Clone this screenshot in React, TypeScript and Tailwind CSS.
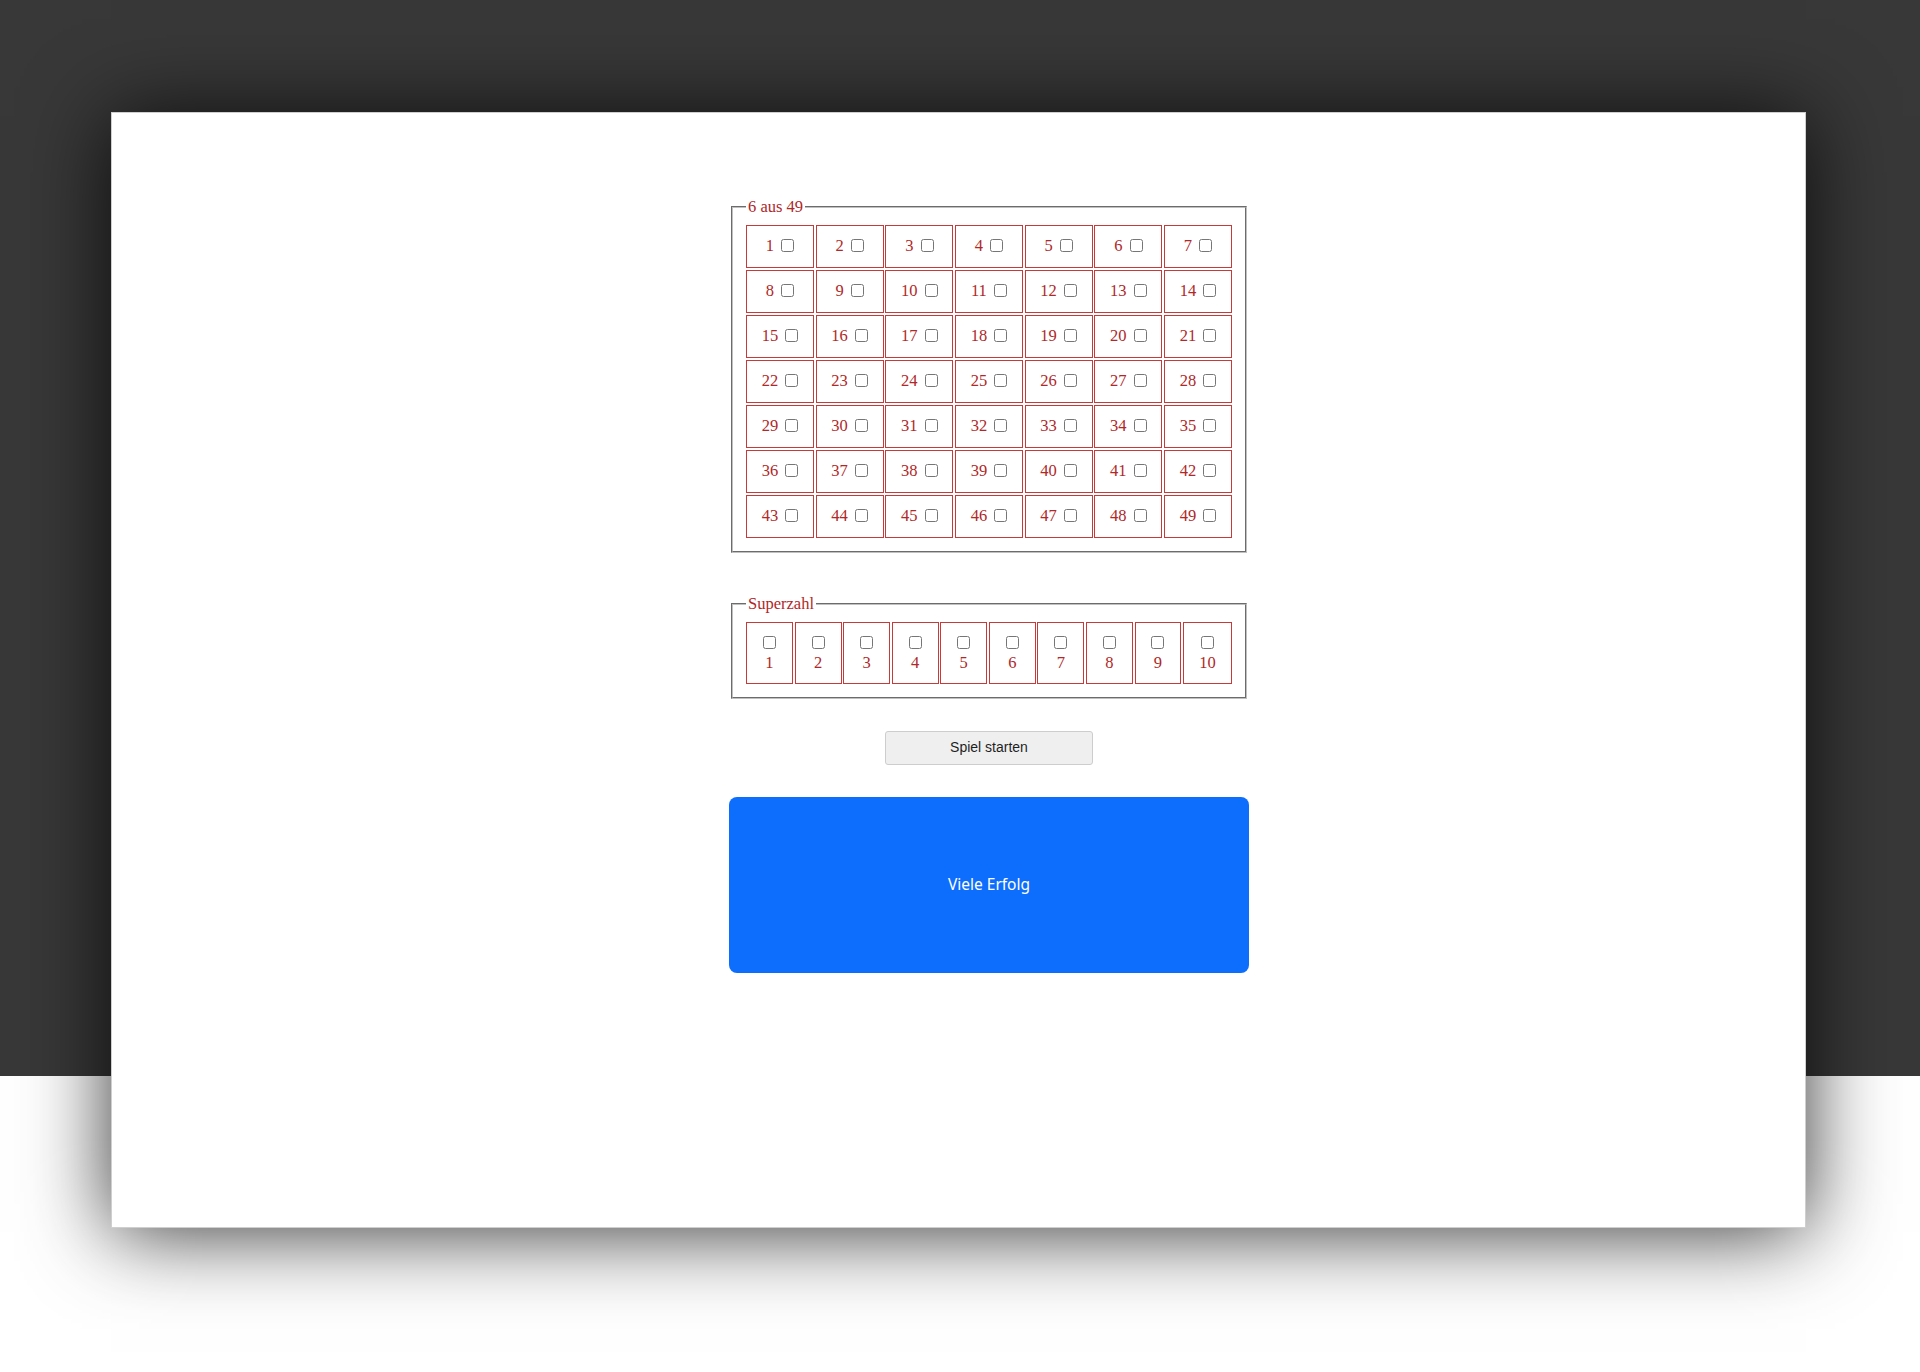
import React from "react";

const serif = "font-['Liberation_Serif','Times_New_Roman',serif]";

function NumCell({ n }: { n: number }) {
  return (
    <div className="h-[43px] border border-[#c83a3a] flex items-center justify-center">
      <span className={`${serif} text-[16.5px] leading-normal text-[#b02828] pt-[1px]`}>
        {n}{" "}
        <input type="checkbox" className="ml-[3px] align-[-1px]" />
      </span>
    </div>
  );
}

function SuperCell({ n, last }: { n: number; last?: boolean }) {
  return (
    <div
      className={`${last ? "w-[49px]" : "flex-1"} h-[62px] border border-[#c83a3a] flex flex-col items-center justify-center pt-[2px]`}
    >
      <input type="checkbox" className="m-0 w-[13px] h-[13px]" />
      <span className={`${serif} text-[16.5px] leading-[18px] mt-[5px] text-[#b02828]`}>{n}</span>
    </div>
  );
}

export default function App() {
  const nums = Array.from({ length: 49 }, (_, i) => i + 1);
  const supers = Array.from({ length: 10 }, (_, i) => i + 1);
  return (
    <div className="w-[1920px] h-[1372px] overflow-hidden bg-[linear-gradient(to_bottom,#383838_0px,#383838_1076px,#ffffff_1076px,#ffffff_100%)] pt-[112px] pl-[111px]">
      <div className="w-[1695px] h-[1116px] bg-white border border-[#cfcfcf] shadow-[0_4px_80px_rgba(0,0,0,0.8)]">
        <div className="ml-[617px] w-[520px] pt-[82px] flex flex-col items-center">
          <fieldset className="w-[516px] border-2 [border-style:groove] border-[#c0c0c0] pl-[13px] pr-[13px] pt-[5px] pb-[13px]">
            <legend className={`${serif} text-[16.5px] leading-normal text-[#b02828] px-[2px]`}>6 aus 49</legend>
            <div className="grid grid-cols-7 gap-x-[1.67px] gap-y-[2px] w-[486px]">
              {nums.map((n) => (
                <NumCell key={n} n={n} />
              ))}
            </div>
          </fieldset>

          <fieldset className="mt-[39px] w-[516px] border-2 [border-style:groove] border-[#c0c0c0] pl-[13px] pr-[13px] pt-[5px] pb-[13px]">
            <legend className={`${serif} text-[16.5px] leading-normal text-[#b02828] px-[2px]`}>Superzahl</legend>
            <div className="flex gap-[1.6px] w-[486px]">
              {supers.map((n) => (
                <SuperCell key={n} n={n} last={n === 10} />
              ))}
            </div>
          </fieldset>

          <button
            type="button"
            className="mt-[32px] w-[208px] h-[34px] bg-[#efefef] border border-[#cdcdcd] rounded-[3px] font-['Liberation_Sans',Arial,sans-serif] text-[14px] text-[#1f1f1f]"
          >
            Spiel starten
          </button>

          <div className="mt-[32px] w-[520px] h-[176px] bg-[#0d6efd] rounded-[8px] flex items-center justify-center">
            <span className="font-['Noto_Sans',sans-serif] text-[15.5px] text-white">Viele Erfolg</span>
          </div>
        </div>
      </div>
    </div>
  );
}
